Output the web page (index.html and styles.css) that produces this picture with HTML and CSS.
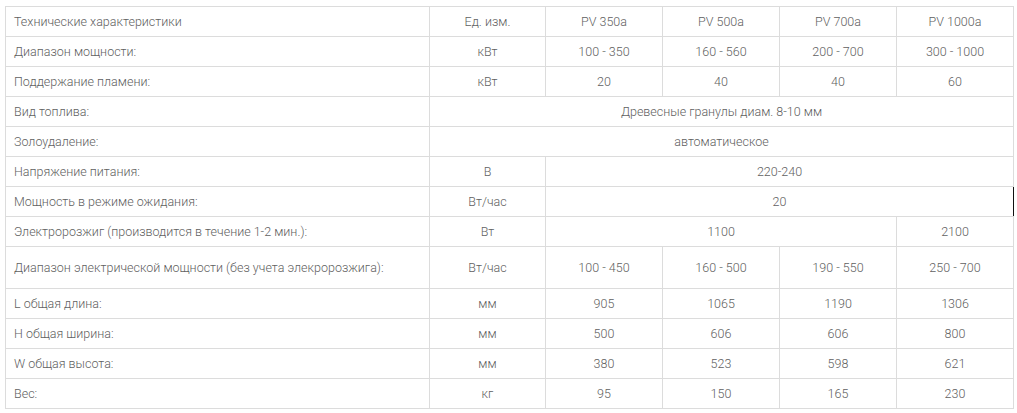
FILE: index.html
```html
<!DOCTYPE html>
<html lang="ru">
<head>
<meta charset="utf-8">
<title>Технические характеристики</title>
<link rel="stylesheet" href="styles.css">
</head>
<body>
<table class="specs">
  <colgroup>
    <col class="c-name">
    <col class="c-unit">
    <col class="c-model">
    <col class="c-model">
    <col class="c-model">
    <col class="c-model">
  </colgroup>
  <tbody>
    <tr>
      <td class="name">Технические характеристики</td>
      <td>Ед. изм.</td>
      <td>PV 350a</td>
      <td>PV 500a</td>
      <td>PV 700a</td>
      <td>PV 1000a</td>
    </tr>
    <tr>
      <td class="name">Диапазон мощности:</td>
      <td>кВт</td>
      <td>100 - 350</td>
      <td>160 - 560</td>
      <td>200 - 700</td>
      <td>300 - 1000</td>
    </tr>
    <tr>
      <td class="name">Поддержание пламени:</td>
      <td>кВт</td>
      <td>20</td>
      <td>40</td>
      <td>40</td>
      <td>60</td>
    </tr>
    <tr>
      <td class="name">Вид топлива:</td>
      <td colspan="5">Древесные гранулы диам. 8-10 мм</td>
    </tr>
    <tr>
      <td class="name">Золоудаление:</td>
      <td colspan="5">автоматическое</td>
    </tr>
    <tr>
      <td class="name">Напряжение питания:</td>
      <td>В</td>
      <td colspan="4">220-240</td>
    </tr>
    <tr>
      <td class="name">Мощность в режиме ожидания:</td>
      <td>Вт/час</td>
      <td colspan="4" class="dark-edge">20</td>
    </tr>
    <tr>
      <td class="name">Электророзжиг (производится в течение 1-2 мин.):</td>
      <td>Вт</td>
      <td colspan="3">1100</td>
      <td>2100</td>
    </tr>
    <tr class="tall">
      <td class="name">Диапазон электрической мощности (без учета элекророзжига):</td>
      <td>Вт/час</td>
      <td>100 - 450</td>
      <td>160 - 500</td>
      <td>190 - 550</td>
      <td>250 - 700</td>
    </tr>
    <tr>
      <td class="name">L общая длина:</td>
      <td>мм</td>
      <td>905</td>
      <td>1065</td>
      <td>1190</td>
      <td>1306</td>
    </tr>
    <tr>
      <td class="name">H общая ширина:</td>
      <td>мм</td>
      <td>500</td>
      <td>606</td>
      <td>606</td>
      <td>800</td>
    </tr>
    <tr>
      <td class="name">W общая высота:</td>
      <td>мм</td>
      <td>380</td>
      <td>523</td>
      <td>598</td>
      <td>621</td>
    </tr>
    <tr>
      <td class="name">Вес:</td>
      <td>кг</td>
      <td>95</td>
      <td>150</td>
      <td>165</td>
      <td>230</td>
    </tr>
  </tbody>
</table>
</body>
</html>
```
FILE: styles.css
```css
html, body {
  margin: 0;
  background: #ffffff;
}

body {
  padding: 6px 5px 0 5px;
  font-family: Roboto, "Liberation Sans", Arial, sans-serif;
  font-size: 12.5px;
  font-weight: 300;
  color: #5f5f5f;
}

.specs {
  border-collapse: collapse;
  table-layout: fixed;
  width: 1008px;
}

.c-name { width: 424px; }
.c-unit { width: 116px; }
.c-model { width: 117px; }

.specs tr {
  height: 30px;
}

.specs tr.tall {
  height: 42px;
}

.specs td {
  border: 1px solid #dcdcdc;
  padding: 0 8px;
  text-align: center;
  vertical-align: middle;
  line-height: 16px;
  white-space: nowrap;
}

.specs td.name {
  text-align: left;
}

.specs td.dark-edge {
  border-right: 1px solid #111111;
}
```
